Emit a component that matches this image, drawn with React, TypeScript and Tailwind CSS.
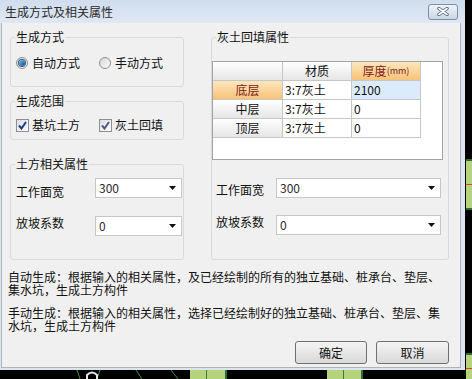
import React from 'react';

const GroupBox: React.FC<{ title: string; className?: string; children?: React.ReactNode }> = ({ title, className, children }) => (
  <fieldset className={`border border-[#d5dadf] rounded-[3px] ${className ?? ''}`}>
    <legend className="ml-[4px] px-[1px] text-[12px] leading-[12px]">{title}</legend>
    {children}
  </fieldset>
);

const Radio: React.FC<{ checked?: boolean }> = ({ checked }) => (
  <span className="w-[12px] h-[12px] rounded-full border border-[#8e8f8f] bg-gradient-to-br from-[#d8d8d8] to-[#fafafa] flex items-center justify-center">
    {checked && (
      <span className="w-[6px] h-[6px] rounded-full bg-gradient-to-br from-[#7ab6e6] to-[#1a4f85] ring-1 ring-[#2a5f93]" />
    )}
  </span>
);

const CheckBox: React.FC<{ color: string }> = ({ color }) => (
  <span className="w-[13px] h-[13px] border border-[#8e8f8f] bg-gradient-to-br from-[#dcdcdc] to-[#ffffff] flex items-center justify-center">
    <svg width="9" height="9" viewBox="0 0 9 9">
      <path d="M1 4.5 L3.5 7.5 L8 1" fill="none" stroke={color} strokeWidth="2" />
    </svg>
  </span>
);

const Combo: React.FC<{ value: string; className?: string }> = ({ value, className }) => (
  <div className={`h-[20px] bg-white border border-[#c4c8cc] flex items-center justify-between pl-[3px] pr-[5px] ${className ?? ''}`}>
    <span className="text-[12px] leading-[12px] text-[#2a2a2a]">{value}</span>
    <svg width="7" height="4" viewBox="0 0 7 4">
      <polygon points="0,0 7,0 3.5,4" fill="#111" />
    </svg>
  </div>
);

const headCell = 'h-[19px] border-r border-b border-[#c6c6c6] bg-gradient-to-b from-[#ffffff] to-[#e6e6e6] flex items-center justify-center';
const orangeCell = 'h-[19px] border-r border-b border-[#c6c6c6] bg-gradient-to-b from-[#fde6bd] to-[#f7c377] flex items-center justify-center text-[#7d1a1a]';
const dataCell = 'h-[19px] border-r border-b border-[#c6c6c6] flex items-center pl-[2px]';

const App: React.FC = () => {
  const rows = [
    { name: '底层', mat: '3:7灰土', thick: '2100', active: true },
    { name: '中层', mat: '3:7灰土', thick: '0', active: false },
    { name: '顶层', mat: '3:7灰土', thick: '0', active: false },
  ];

  return (
    <div className="relative w-[472px] h-[379px] bg-black overflow-hidden font-['Noto_Sans_CJK_SC',sans-serif] text-[12px] text-[#111]">
      {/* dialog */}
      <div className="w-[465px] h-[370px] bg-[#dce5ef] flex flex-col pl-[1px] pr-[4px] pb-[2px]">
        {/* title bar */}
        <div className="h-[23px] -ml-[1px] -mr-[4px] flex items-center justify-between bg-gradient-to-b from-[#d0dded] to-[#dfe8f3] pl-[5px] pr-[7px]">
          <span className="text-[12px] leading-[12px] text-[#2b2b2b]">生成方式及相关属性</span>
          <div className="w-[30px] h-[16px] rounded-[3px] border border-[#7f8fa3] bg-gradient-to-b from-[#eef3f9] to-[#c9d6e6] flex items-center justify-center">
            <svg width="12" height="9" viewBox="0 0 12 9">
              <path d="M2 1.5 L10 7.5 M10 1.5 L2 7.5" stroke="#55657a" strokeWidth="3.4" strokeLinecap="round" />
              <path d="M2 1.5 L10 7.5 M10 1.5 L2 7.5" stroke="#ffffff" strokeWidth="1.6" strokeLinecap="round" />
            </svg>
          </div>
        </div>

        {/* client area */}
        <div className="flex-1 bg-[#f0f0f0] border border-[#aab4bf] border-t-0 pl-[8px] pt-[8px] flex flex-col">
          <div className="flex gap-[27px]">
            {/* left column */}
            <div className="w-[174px] flex flex-col">
              <GroupBox title="生成方式" className="h-[56px]">
                <div className="mt-[13px] pl-[5px] flex items-center h-[14px]">
                  <div className="w-[83px] flex items-center gap-[4px]">
                    <Radio checked />
                    <span className="leading-[12px]">自动方式</span>
                  </div>
                  <div className="flex items-center gap-[4px]">
                    <Radio />
                    <span className="leading-[12px]">手动方式</span>
                  </div>
                </div>
              </GroupBox>

              <GroupBox title="生成范围" className="h-[45px] mt-[8px]">
                <div className="mt-[11px] pl-[5px] flex items-center h-[14px]">
                  <div className="w-[83px] flex items-center gap-[3px]">
                    <CheckBox color="#1c3a8a" />
                    <span className="leading-[12px]">基坑土方</span>
                  </div>
                  <div className="flex items-center gap-[3px]">
                    <CheckBox color="#4d5d8f" />
                    <span className="leading-[12px]">灰土回填</span>
                  </div>
                </div>
              </GroupBox>

              <GroupBox title="土方相关属性" className="h-[102px] mt-[18px]">
                <div className="mt-[8px] pl-[5px] flex items-start">
                  <span className="w-[79px] mt-[8px] leading-[12px]">工作面宽</span>
                  <Combo value="300" className="w-[87px]" />
                </div>
                <div className="mt-[18px] pl-[5px] flex items-start">
                  <span className="w-[79px] mt-[1px] leading-[12px]">放坡系数</span>
                  <Combo value="0" className="w-[87px]" />
                </div>
              </GroupBox>
            </div>

            {/* right column */}
            <GroupBox title="灰土回填属性" className="w-[238px] h-[229px]">
              <div className="mt-[18px] w-[231px] h-[99px] border border-[#a3a3a3] bg-white">
                <div className="grid grid-cols-[70px_69px_69px]">
                  <div className={headCell} />
                  <div className={headCell}>
                    <span className="leading-[12px]">材质</span>
                  </div>
                  <div className={orangeCell}>
                    <span className="leading-[12px]">厚度</span>
                    <span className="text-[9px] leading-[12px]">(mm)</span>
                  </div>
                  {rows.map((r) => (
                    <React.Fragment key={r.name}>
                      <div className={r.active ? orangeCell : headCell}>
                        <span className="leading-[12px]">{r.name}</span>
                      </div>
                      <div className={dataCell}>
                        <span className="leading-[12px]">{r.mat}</span>
                      </div>
                      <div className={`${dataCell} ${r.active ? 'bg-[#dcebfb]' : ''}`}>
                        <span className="leading-[12px]">{r.thick}</span>
                      </div>
                    </React.Fragment>
                  ))}
                </div>
              </div>

              <div className="mt-[18px] pl-[4px] flex items-start">
                <span className="w-[60px] mt-[6px] leading-[12px]">工作面宽</span>
                <Combo value="300" className="w-[165px]" />
              </div>
              <div className="mt-[17px] pl-[4px] flex items-start">
                <span className="w-[60px] mt-[1px] leading-[12px]">放坡系数</span>
                <Combo value="0" className="w-[165px]" />
              </div>
            </GroupBox>
          </div>

          {/* descriptions */}
          <div className="mt-[10px] -ml-[2px] leading-[13px] whitespace-nowrap">
            <p>
              自动生成：根据输入的相关属性，及已经绘制的所有的独立基础、桩承台、垫层、
              <br />
              集水坑，生成土方构件
            </p>
            <p className="mt-[10px]">
              手动生成：根据输入的相关属性，选择已经绘制好的独立基础、桩承台、垫层、集
              <br />
              水坑，生成土方构件
            </p>
          </div>

          {/* buttons */}
          <div className="mt-[9px] flex justify-end gap-[9px] pr-[11px]">
            <button className="w-[72px] h-[23px] rounded-[3px] border border-[#707070] bg-gradient-to-b from-[#f4f4f4] to-[#d9d9d9] text-[12px] leading-[12px]">
              确定
            </button>
            <button className="w-[73px] h-[23px] rounded-[3px] border border-[#707070] bg-gradient-to-b from-[#f4f4f4] to-[#d9d9d9] text-[12px] leading-[12px]">
              取消
            </button>
          </div>
        </div>
      </div>

      {/* background drawing */}
      <div className="absolute left-[190px] top-[370px] w-[37px] h-[9px] bg-[#b3d47a] border-r-2 border-[#2f6b2f]">
        <div className="ml-[16px] w-[1px] h-full bg-[#3d7a3d]" />
      </div>
      <div className="absolute left-[327px] top-[370px] w-[36px] h-[9px] bg-[#b3d47a] border-r-2 border-[#2f6b2f]">
        <div className="ml-[16px] w-[1px] h-full bg-[#3d7a3d]" />
      </div>
      <div className="absolute left-[466px] top-[159px] w-[6px] h-[51px] bg-[#b3d47a] border-y-2 border-[#2f6b2f]">
        <div className="mt-[23px] h-[1px] bg-[#d2472a]" />
      </div>
      <div className="absolute left-[466px] top-[353px] w-[6px] h-[26px] bg-[#b3d47a] border-t-2 border-[#2f6b2f]">
        <div className="mt-[13px] h-[1px] bg-[#d2472a]" />
      </div>
      <svg className="absolute left-[74px] top-[370px]" width="110" height="9" viewBox="0 0 110 9">
        <path d="M3 0 L6 9 M26 0 L23 9 M62 0 L68 9 M97 0 L104 9" stroke="#3f8a3f" strokeWidth="1" />
        <path d="M13 9 L13 5 Q18 0 23 5 L23 9" stroke="#e6e6e6" strokeWidth="2" fill="none" />
      </svg>
    </div>
  );
};

export default App;
